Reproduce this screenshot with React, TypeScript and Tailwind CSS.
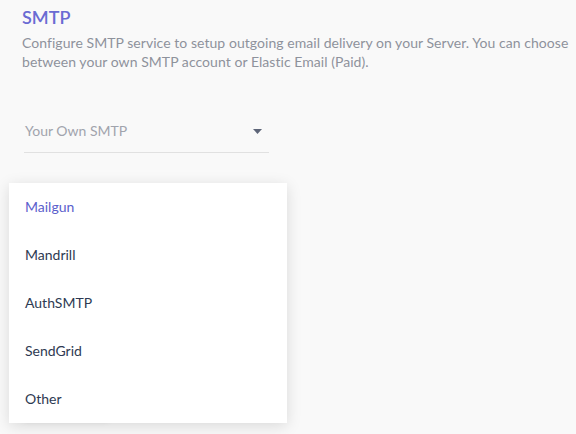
import { useState } from "react";

const providers = ["Mailgun", "Mandrill", "AuthSMTP", "SendGrid", "Other"];

const SmtpSettings = () => {
  const [selected, setSelected] = useState("Mailgun");

  return (
    <div className="relative min-h-[434px] bg-[#f9f9f9] px-[22px] pt-[5px] font-['Lato','Liberation_Sans',sans-serif]">
      <h2 className="text-[18px] leading-[24px] font-semibold text-[#6a6bd3]">SMTP</h2>
      <p className="mt-[4px] w-[552px] text-[14px] leading-[19px] tracking-[0.05px] text-[#8e929c]">
        Configure SMTP service to setup outgoing email delivery on your Server. You can choose
        between your own SMTP account or Elastic Email (Paid).
      </p>

      <div className="mt-[50px] ml-[2px] flex w-[245px] items-center justify-between border-b border-[#e1e1e1] pb-[11px] pl-[1px] pr-[7px]">
        <span className="text-[14px] leading-[20px] text-[#a1a4ad]">Your Own SMTP</span>
        <svg width="9" height="5" viewBox="0 0 9 5">
          <path d="M0 0h9L4.5 5z" fill="#5d6578" />
        </svg>
      </div>

      {/* button sitting behind the open menu */}
      <div className="mt-[231px] h-[34px] w-[88px] rounded bg-white shadow-md" />

      <ul className="absolute left-[9px] top-[183px] w-[278px] bg-white shadow-[0_3px_14px_rgba(0,0,0,0.13)]">
        {providers.map((p) => (
          <li
            key={p}
            onClick={() => setSelected(p)}
            className={`flex h-[48px] cursor-pointer items-center px-4 pb-[2px] text-[14px] ${
              p === selected ? "text-[#5b60cc]" : "text-[#2e3a52]"
            }`}
          >
            {p}
          </li>
        ))}
      </ul>
    </div>
  );
};

export default function App() {
  return <SmtpSettings />;
}
